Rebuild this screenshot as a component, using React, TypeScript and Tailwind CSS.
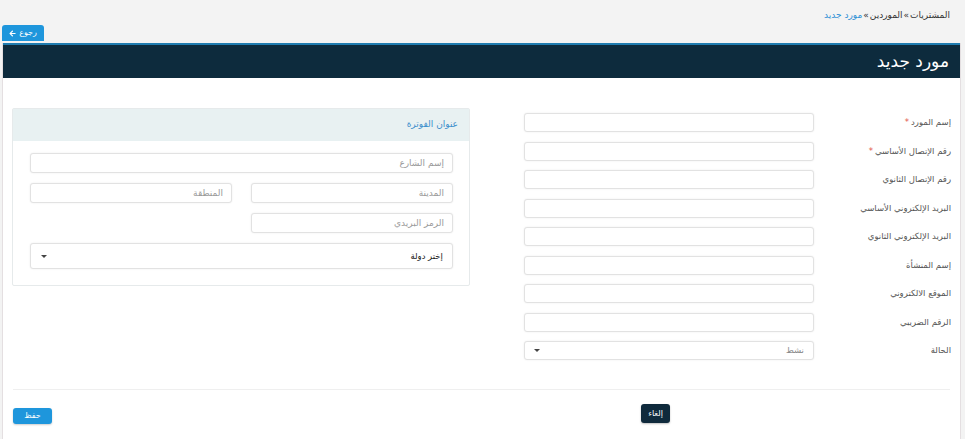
import { FaArrowLeft } from 'react-icons/fa'

const fields = [
  { label: 'إسم المورد', required: true },
  { label: 'رقم الإتصال الأساسي', required: true },
  { label: 'رقم الإتصال الثانوي' },
  { label: 'البريد الإلكتروني الأساسي' },
  { label: 'البريد الإلكتروني الثانوي' },
  { label: 'إسم المنشأة' },
  { label: 'الموقع الالكتروني' },
  { label: 'الرقم الضريبي' },
]

function Caret() {
  return <span className="w-0 h-0 border-l-[3px] border-r-[3px] border-t-[3px] border-l-transparent border-r-transparent border-t-[#444]" />
}

function TextInput({ placeholder, className = '' }: { placeholder?: string; className?: string }) {
  return (
    <input
      placeholder={placeholder}
      className={`bg-white border border-[#e2e2e2] rounded-[3px] shadow-[0_0_2px_rgba(0,0,0,0.08)] px-2 text-[9px] text-[#555] placeholder:text-[#9a9a9a] outline-none ${className}`}
    />
  )
}

export default function App() {
  return (
    <div dir="rtl" className="min-h-screen w-full bg-[#f3f3f3] font-['DejaVu_Sans',sans-serif]">
      {/* Breadcrumb */}
      <div className="h-[25px] flex items-center pr-[15px] pt-[6px] text-[9px] text-[#333]">
        <span>المشتريات</span>
        <span className="mx-[1px]">»</span>
        <span>الموردين</span>
        <span className="mx-[1px]">»</span>
        <span className="text-[#2d8fd5]">مورد جديد</span>
      </div>

      <div className="flex justify-end pl-[2px]">
        <button className="h-[16px] w-[42px] bg-[#1e96dc] rounded-t-[3px] text-white text-[8px] flex items-center justify-center gap-[3px]">
          رجوع
          <FaArrowLeft className="w-[7px] h-[7px]" />
        </button>
      </div>

      {/* Panel */}
      <div className="mt-[2px] ml-[2px] mr-[4px] bg-white border-x border-[#e4dfe1] min-h-[400px]">
        <div className="h-[35px] bg-[#0d2b3d] border-t-[2px] border-[#1f7cb0] flex items-center pr-[11px]">
          <h1 className="text-white text-[17px] font-normal">مورد جديد</h1>
        </div>

        <div className="flex px-[9px] pt-[30px]">
          {/* Supplier info */}
          <div className="w-[427px] mt-[5px] flex flex-col gap-[9.5px]">
            {fields.map((f) => (
              <div key={f.label} className="flex items-center h-[19px]">
                <label className="w-[137px] text-[8.5px] text-[#555]">
                  {f.label}
                  {f.required && <span className="text-[#e2574c] mr-[2px]">*</span>}
                </label>
                <TextInput className="w-[290px] h-[19px]" />
              </div>
            ))}
            <div className="flex items-center h-[19px]">
              <label className="w-[137px] text-[8.5px] text-[#555]">الحالة</label>
              <div className="w-[290px] h-[19px] bg-white border border-[#e2e2e2] rounded-[3px] shadow-[0_0_2px_rgba(0,0,0,0.08)] flex items-center justify-between px-[9px] text-[8.5px] text-[#888]">
                <span>نشط</span>
                <Caret />
              </div>
            </div>
          </div>

          <div className="w-[54px]" />

          {/* Billing address */}
          <div className="w-[458px] border border-[#e6eaeb] rounded-[2px] self-start">
            <div className="h-[32px] bg-[#e8f1f2] flex items-center pr-[11px] text-[9px] text-[#3d8fcc]">
              عنوان الفوترة
            </div>
            <div className="pr-[16px] pl-[17px] pt-[12px] pb-[16px] flex flex-col gap-[10px]">
              <TextInput placeholder="إسم الشارع" className="w-full h-[20px]" />
              <div className="flex justify-between">
                <TextInput placeholder="المدينة" className="w-[202px] h-[20px]" />
                <TextInput placeholder="المنطقة" className="w-[202px] h-[20px]" />
              </div>
              <div className="flex">
                <TextInput placeholder="الرمز البريدي" className="w-[202px] h-[20px]" />
              </div>
              <div className="w-full h-[26px] bg-white border border-[#e2e2e2] rounded-[3px] shadow-[0_0_2px_rgba(0,0,0,0.08)] flex items-center justify-between pr-[9px] pl-[10px] text-[8.5px] text-[#222]">
                <span>إختر دولة</span>
                <Caret />
              </div>
            </div>
          </div>
        </div>

        <div className="mx-[10px] mt-[29px] border-t border-[#efefef]" />

        <div dir="ltr" className="flex items-start px-[10px]">
          <button className="mt-[18px] w-[39px] h-[16px] bg-[#1e96dc] rounded-[3px] shadow-[0_1px_2px_rgba(0,0,0,0.2)] text-white text-[8px]">
            حفظ
          </button>
          <button className="ml-[589px] mt-[14px] w-[29px] h-[19px] bg-[#0f2a3c] rounded-[3px] shadow-[0_1px_2px_rgba(0,0,0,0.25)] text-white text-[8px]">
            إلغاء
          </button>
        </div>
      </div>
    </div>
  )
}
